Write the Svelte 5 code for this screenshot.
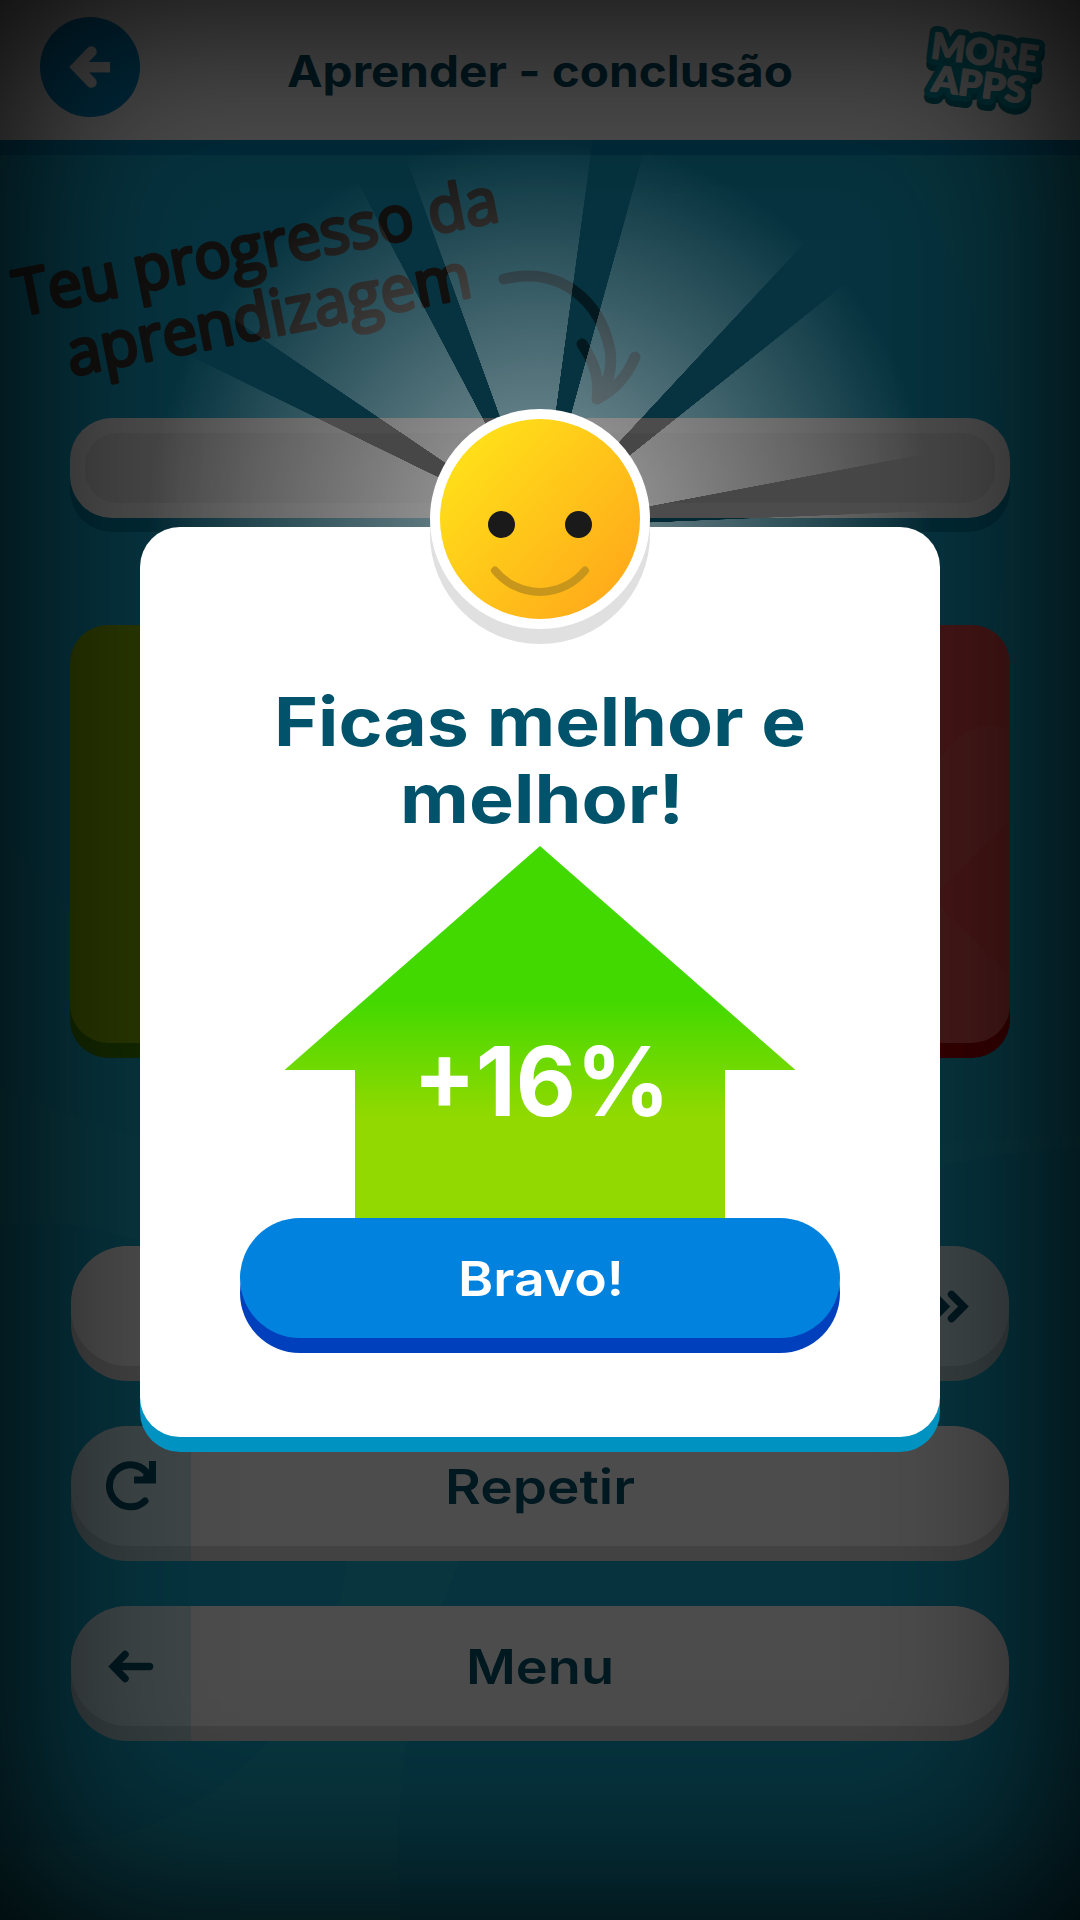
<script>
  const actions = [
    { label: '', icon: 'next', side: 'right' },
    { label: 'Repetir', icon: 'redo', side: 'left', width: 190 },
    { label: 'Menu', icon: 'back', side: 'left', width: 148 }
  ];
</script>

<div class="screen">
  <svg class="backdrop" viewBox="0 0 1080 1920" aria-hidden="true">
    <path d="M0 1085 Q150 1160 330 1165 H760 Q930 1140 1080 1135 V1920 H0Z" fill="#22bcd2" opacity=".35" />
    <circle cx="450" cy="500" r="558" fill="#12a4d6" opacity=".35" />
    <circle cx="35" cy="1535" r="312" fill="#12a6d0" opacity=".65" />
    <circle cx="1100" cy="1850" r="702" fill="#12a6d0" opacity=".65" />
  </svg>

  <header>
    <button class="back" aria-label="Voltar">
      <svg width="100" height="100" viewBox="0 0 100 100">
        <g fill="none" stroke="#fff" stroke-width="10.5">
          <path d="M51.5 34.5 L36.5 50 L51.5 65.5" stroke-linecap="round" />
          <path d="M38 50.2 H70" />
        </g>
      </svg>
    </button>
    <svg class="title" width="520" height="140" viewBox="280 0 520 140">
      <text x="288" y="87" font-size="44" font-weight="700" textLength="506" lengthAdjust="spacingAndGlyphs">Aprender - conclusão</text>
    </svg>
    <svg class="more" width="140" height="110" viewBox="910 15 140 110">
      <g class="sticker low" transform="translate(0 6)">
        <text transform="translate(930 58) rotate(7.5)" textLength="107" lengthAdjust="spacingAndGlyphs">MORE</text>
        <text transform="translate(931 91) rotate(7.5)" textLength="94" lengthAdjust="spacingAndGlyphs">APPS</text>
      </g>
      <g class="sticker">
        <text transform="translate(930 58) rotate(7.5)" textLength="107" lengthAdjust="spacingAndGlyphs">MORE</text>
        <text transform="translate(931 91) rotate(7.5)" textLength="94" lengthAdjust="spacingAndGlyphs">APPS</text>
      </g>
      <g class="sticker face">
        <text transform="translate(930 58) rotate(7.5)" textLength="107" lengthAdjust="spacingAndGlyphs">MORE</text>
        <text transform="translate(931 91) rotate(7.5)" textLength="94" lengthAdjust="spacingAndGlyphs">APPS</text>
      </g>
    </svg>
  </header>

  <main>
    <svg class="note" width="1080" height="263" viewBox="0 155 1080 263">
      <g class="hand">
        <text transform="translate(19 316) rotate(-11.2)" textLength="492" lengthAdjust="spacingAndGlyphs">Teu progresso da</text>
        <text transform="translate(71 376) rotate(-11.2)" textLength="411" lengthAdjust="spacingAndGlyphs">aprendizagem</text>
      </g>
      <g fill="none" stroke="#000" stroke-width="11" stroke-linecap="round" stroke-linejoin="round" opacity=".5">
        <path d="M504 279 C560 266 600 300 610 350 C613 372 606 388 597 399 C600 378 594 362 582 344 M597 399 C615 390 628 374 635 357" />
      </g>
    </svg>

    <div class="progress"><div class="track"></div></div>

    <div class="cards">
      <div class="card green"></div>
      <div class="card red">
        <svg width="460" height="418" viewBox="550 625 460 418">
          <path d="M990 773 L740 1023 M740 773 L990 1023" stroke="#fff" stroke-width="94" stroke-linecap="round" opacity=".06" />
        </svg>
      </div>
    </div>

    <div class="actions">
      {#each actions as a}
        <div class="action {a.side}">
          <div class="zone">
            <svg width="120" height="120" viewBox="0 0 120 120" fill="none" stroke="#005068" stroke-width="7.5">
              {#if a.icon === 'next'}
                <path d="M62.500 48.500 L74.500 60.500 L62.500 72.500 M44 48.500 L56 60.500 L44 72.500" stroke-linecap="round" />
              {:else if a.icon === 'redo'}
                <path d="M74 75 A21 21 0 1 1 78 50" stroke-width="7" stroke-linecap="round" />
                <path d="M81.500 35 V54 H63" stroke-width="7" />
                <path d="M75 44 L83 53 L70 54Z" fill="#005068" stroke="none" />
              {:else}
                <path d="M54 48.500 L42.500 60.500 L54 72.500" stroke-linecap="round" />
                <path d="M44 60.500 H78.500" stroke-linecap="round" />
              {/if}
            </svg>
          </div>
          {#if a.label}
            <svg class="label" width="300" height="120" viewBox="0 0 300 120">
              <text x={150 - a.width / 2} y="78" font-size="48" font-weight="600" textLength={a.width} lengthAdjust="spacingAndGlyphs">{a.label}</text>
            </svg>
          {/if}
        </div>
      {/each}
    </div>
  </main>

  <div class="overlay">
    <div class="rays"></div>
    <section class="modal">
      <svg class="smiley" width="220" height="235" viewBox="0 0 220 235">
        <defs>
          <linearGradient id="sun" x1=".12" y1=".16" x2=".88" y2=".84">
            <stop offset="0" stop-color="#ffdf19" />
            <stop offset="1" stop-color="#ffac1a" />
          </linearGradient>
        </defs>
        <circle cx="110" cy="125" r="110" fill="#e0e0e0" />
        <circle cx="110" cy="110" r="110" fill="#fff" />
        <circle cx="110" cy="110" r="100" fill="url(#sun)" />
        <circle cx="71.500" cy="115.500" r="13.500" fill="#1a1a1a" />
        <circle cx="148.500" cy="115.500" r="13.500" fill="#1a1a1a" />
        <path d="M65 161.500 A58 58 0 0 0 155 161.500" fill="none" stroke="#c8961b" stroke-width="8" stroke-linecap="round" />
      </svg>
      <svg class="message" width="600" height="691" viewBox="240 527 600 691">
        <defs>
          <linearGradient id="rise" gradientUnits="userSpaceOnUse" x1="0" y1="1000" x2="0" y2="1116">
            <stop offset="0" stop-color="#42d900" />
            <stop offset="1" stop-color="#91d900" />
          </linearGradient>
        </defs>
        <g fill="#00536b" font-size="67" font-weight="700">
          <text x="274" y="746" textLength="532" lengthAdjust="spacingAndGlyphs">Ficas melhor e</text>
          <text x="400" y="823" textLength="284" lengthAdjust="spacingAndGlyphs">melhor!</text>
        </g>
        <path d="M540 846 L795.500 1070 H725 V1218 H355 V1070 H284.500Z" fill="url(#rise)" />
        <text x="413" y="1116" font-size="96" font-weight="700" fill="#fff" textLength="257" lengthAdjust="spacingAndGlyphs">+16%</text>
      </svg>
      <button class="bravo">
        <svg width="300" height="120" viewBox="390 1218 300 120">
          <text x="458" y="1296" font-size="48" font-weight="600" fill="#fff" textLength="166" lengthAdjust="spacingAndGlyphs">Bravo!</text>
        </svg>
      </button>
    </section>
  </div>
</div>

<style>
  :global(body) { margin: 0; background: #000; }
  svg { display: block; }
  text { font-family: Inter, "Open Sans", sans-serif; }
  button { border: 0; padding: 0; }
  .screen {
    position: relative;
    width: 1080px;
    height: 1920px;
    overflow: hidden;
    background: #19aed0;
  }
  .backdrop { position: absolute; inset: 0; }
  header {
    position: relative;
    box-sizing: border-box;
    height: 140px;
    padding: 0 30px 0 40px;
    display: flex;
    justify-content: space-between;
    background: #fff;
    box-shadow: 0 15px 0 #008ec0;
  }
  .back {
    width: 100px;
    height: 100px;
    margin-top: 17px;
    border-radius: 50%;
    background: #0090cf;
  }
  .title { fill: #005068; margin-left: 27px; }
  .more { margin-top: 15px; }
  .sticker text {
    font-family: Lato, sans-serif;
    font-size: 36px;
    font-weight: 900;
    fill: #00a0b4;
    stroke: #00a0b4;
    stroke-width: 13px;
    stroke-linejoin: round;
  }
  .sticker.low text { fill: #007f90; stroke: #007f90; }
  .sticker.face text { fill: #fff; stroke: #fff; stroke-width: 1.5px; }
  main {
    position: relative;
    padding-top: 15px;
    display: flex;
    flex-direction: column;
    align-items: center;
  }
  .note { overflow: visible; }
  .hand text {
    font-family: "Open Sans", Lato, sans-serif;
    font-size: 63px;
    font-weight: 500;
    fill: #3b3835;
    stroke: #3b3835;
    stroke-width: 3.5px;
    stroke-linejoin: round;
  }
  .progress {
    box-sizing: border-box;
    width: 940px;
    height: 100px;
    padding: 15px;
    border-radius: 42px;
    background: #fff;
    box-shadow: 0 14px 0 #008aae;
  }
  .track { height: 70px; border-radius: 32px; background: #eee; }
  .cards {
    display: flex;
    gap: 20px;
    width: 940px;
    margin-top: 107px;
  }
  .card { flex: 1; height: 418px; border-radius: 38px; }
  .card svg { border-radius: 38px; }
  .green { background: #88b400; box-shadow: 0 15px 0 #408500; }
  .red { background: #e64848; box-shadow: 0 15px 0 #b00000; }
  .card.red svg { margin-left: auto; }
  .actions {
    width: 938px;
    margin-top: 203px;
    display: flex;
    flex-direction: column;
    gap: 45px;
  }
  .action {
    position: relative;
    height: 135px;
    display: flex;
    justify-content: center;
    border-radius: 57px;
    overflow: hidden;
    background: #dedede;
  }
  .action::before {
    content: "";
    position: absolute;
    inset: 0 0 15px;
    border-radius: 57px;
    background: #fff;
  }
  .zone {
    position: absolute;
    top: 0;
    bottom: 0;
    left: 0;
    width: 120px;
    background: rgba(0, 150, 180, .18);
  }
  .right .zone { left: auto; right: 0; }
  .label { position: relative; fill: #005068; }
  .overlay {
    position: absolute;
    inset: 0;
    display: flex;
    justify-content: center;
    align-items: flex-start;
    background: rgba(0, 0, 0, .7);
    box-shadow: inset 0 0 200px #000;
  }
  .rays {
    position: absolute;
    left: 145px;
    top: 132px;
    width: 790px;
    height: 790px;
    background: conic-gradient(
      #fff 0deg 7.7deg, transparent 7.8deg 15.4deg,
      #fff 15.5deg 42.9deg, transparent 43deg 51.4deg,
      #fff 51.5deg 79.2deg, transparent 79.3deg 87.6deg,
      #fff 87.7deg 296deg, transparent 296.1deg 304.1deg,
      #fff 304.2deg 332.1deg, transparent 332.2deg 340deg,
      #fff 340.1deg 360deg
    );
    mask-image: radial-gradient(circle closest-side, rgba(0, 0, 0, .51), transparent);
  }
  .modal {
    position: relative;
    box-sizing: border-box;
    width: 800px;
    height: 910px;
    margin-top: 527px;
    display: flex;
    flex-direction: column;
    align-items: center;
    border-radius: 40px;
    background: #fff;
    box-shadow: 0 15px 0 #0093c2;
  }
  .smiley { position: absolute; left: 290px; top: -118px; }
  .bravo {
    width: 600px;
    height: 120px;
    display: flex;
    justify-content: center;
    border-radius: 60px;
    background: #0082de;
    box-shadow: 0 15px 0 #0040bd;
  }
</style>
